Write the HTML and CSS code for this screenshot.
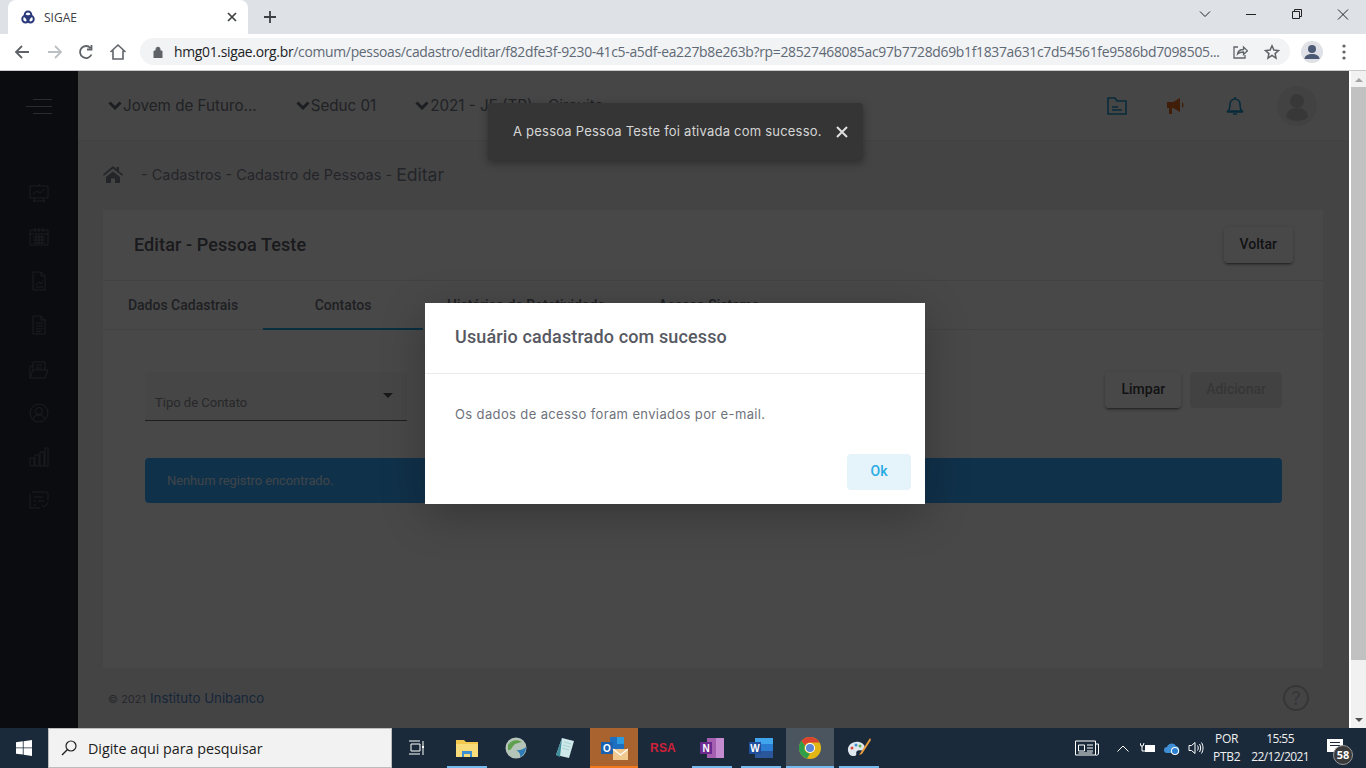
FILE: index.html
```html
<!DOCTYPE html>
<html lang="pt-BR">
<head>
<meta charset="utf-8">
<title>SIGAE</title>
<link rel="stylesheet" href="styles.css">
</head>
<body>
<header class="tabbar">
  <div class="tab">
    <svg class="favicon" viewBox="0 0 16 16" width="14" height="14"><g fill="none" stroke="#2b3a7a" stroke-width="2.200"><circle cx="8" cy="5.600" r="3.800"/><circle cx="5.200" cy="10.400" r="3.800"/><circle cx="10.800" cy="10.400" r="3.800"/></g></svg>
    <span class="tab-title">SIGAE</span>
    <svg class="tab-close" viewBox="0 0 10 10" width="10" height="10"><path d="M1 1l8 8M9 1l-8 8" stroke="#3c4043" stroke-width="1.700"/></svg>
  </div>
  <svg class="newtab" viewBox="0 0 12 12" width="12" height="12"><path d="M6 0v12M0 6h12" stroke="#3c4043" stroke-width="1.800"/></svg>
  <div class="winctrls">
    <svg class="winbtn" viewBox="0 0 46 16" width="46" height="16"><path d="M18 5.500l5 5 5-5" fill="none" stroke="#222" stroke-width="1"/></svg>
    <svg class="winbtn" viewBox="0 0 46 16" width="46" height="16"><path d="M18 8.500h10" stroke="#222"/></svg>
    <svg class="winbtn" viewBox="0 0 46 16" width="46" height="16"><path d="M18.500 5.500h7v7h-7zM20.500 5.500v-2h7v7h-2" fill="none" stroke="#222"/></svg>
    <svg class="winbtn" viewBox="0 0 46 16" width="46" height="16"><path d="M18 3.500l10 10M28 3.500l-10 10" stroke="#222"/></svg>
  </div>
</header>
<nav class="toolbar">
  <svg class="navicon" viewBox="0 0 16 16" width="16" height="16"><path d="M15 8H2M8 2L2 8l6 6" fill="none" stroke="#5f6368" stroke-width="1.800"/></svg>
  <svg class="navicon" viewBox="0 0 16 16" width="16" height="16"><path d="M1 8h13M8 2l6 6-6 6" fill="none" stroke="#bcc0c4" stroke-width="1.800"/></svg>
  <svg class="navicon nav-tight" viewBox="0 0 16 16" width="16" height="16"><path d="M13.500 10.500A6 6 0 1 1 12.500 4M13.500 1v4.500H9" fill="none" stroke="#5f6368" stroke-width="1.800"/></svg>
  <svg class="navicon nav-tight" viewBox="0 0 18 18" width="18" height="18"><path d="M1.500 9L9 2l7.500 7M4 7.500V16h10V7.500" fill="none" stroke="#5f6368" stroke-width="1.600"/></svg>
  <div class="omnibox">
    <svg class="lock" viewBox="0 0 10 12" width="10" height="12"><path d="M1 5h8v7H1zM3 5V3.200a2 2 0 0 1 4 0V5" fill="#5f6368" stroke="#5f6368"/></svg>
    <div class="url"><span class="url-host">hmg01.sigae.org.br</span>/comum/pessoas/cadastro/editar/f82dfe3f-9230-41c5-a5df-ea227b8e263b?rp=28527468085ac97b7728d69b1f1837a631c7d54561fe9586bd7098505...</div>
    <svg class="share" viewBox="0 0 16 16" width="16" height="16"><path d="M6 3H2v11h11v-3M5.500 10c.5-3 3-4.500 6-4.500V3l4 3.800-4 3.700V8c-2.500 0-4.500.5-6 2z" fill="none" stroke="#5f6368" stroke-width="1.300"/></svg>
    <svg class="star" viewBox="0 0 16 16" width="16" height="16"><path d="M8 1.800l1.900 4.200 4.600.5-3.400 3.100.9 4.500L8 11.400l-4 2.700.9-4.500-3.400-3.100 4.600-.5z" fill="none" stroke="#5f6368" stroke-width="1.500"/></svg>
  </div>
  <div class="profile"><svg viewBox="0 0 22 22" width="22" height="22"><circle cx="11" cy="8" r="4" fill="#4d5a75"/><path d="M3.500 18c0-3.500 3.500-5 7.500-5s7.500 1.500 7.500 5z" fill="#4d5a75"/></svg></div>
  <svg class="kebab" viewBox="0 0 4 16" width="4" height="16"><circle cx="2" cy="2" r="1.600" fill="#5f6368"/><circle cx="2" cy="8" r="1.600" fill="#5f6368"/><circle cx="2" cy="14" r="1.600" fill="#5f6368"/></svg>
</nav>

<div class="window">
  <div class="viewport">
    <aside class="sidebar">
      <div class="burger"><i class="b-short"></i><i class="b-long"></i><i class="b-short"></i></div>
      <ul class="sidenav">
        <li><svg viewBox="0 0 20 20" width="20" height="20"><path d="M1 3h18v12H1zM10 1v2M4 11l4-3 3 2 5-4M6 15l-1.500 4M14 15l1.500 4M4 18h12"/></svg></li>
        <li><svg viewBox="0 0 20 20" width="20" height="20"><path d="M1 3h18v15H1zM1 7h18M6 1v4M10 1v4M14 1v4M4 10h12M4 13h12M4 16h12M7 8v9M10 8v9M13 8v9"/></svg></li>
        <li><svg viewBox="0 0 20 20" width="20" height="20"><path d="M4 1h8l4 4v14H4zM12 1v4h4M7 14l3-3 2 2 2-3M7 16h7"/></svg></li>
        <li><svg viewBox="0 0 20 20" width="20" height="20"><path d="M4 1h8l4 4v14H4zM12 1v4h4M7 8h7M7 11h7M7 14h7M7 16.500h5"/></svg></li>
        <li><svg viewBox="0 0 20 20" width="20" height="20"><path d="M1 19V7h3M4 3h12v8M4 3v8M7 6h6M7 9h6M1 19h15l3-8H4z"/></svg></li>
        <li><svg viewBox="0 0 20 20" width="20" height="20"><circle cx="10" cy="10" r="9"/><circle cx="10" cy="8" r="3.500"/><path d="M4 16c1-3 3-4 6-4s5 1 6 4"/></svg></li>
        <li><svg viewBox="0 0 20 20" width="20" height="20"><path d="M1 11h4v8H1zM6 8h4v11H6zM11 5h4v14h-4zM16 1h3v18h-3z"/></svg></li>
        <li><svg viewBox="0 0 20 20" width="20" height="20"><path d="M3 1h14a2 2 0 0 1 2 2v6M1 3v14h10M5 6h9M5 10h2M9 10h6M5 14h2M13 14l2 2 4-4"/></svg></li>
      </ul>
    </aside>
    <main class="main">
      <div class="topbar">
        <div class="crumb-select"><svg class="chev" viewBox="0 0 14 9" width="14" height="9"><path d="M1.500 1.500L7 7l5.500-5.500"/></svg><span>Jovem de Futuro...</span></div>
        <div class="crumb-select"><svg class="chev" viewBox="0 0 14 9" width="14" height="9"><path d="M1.500 1.500L7 7l5.500-5.500"/></svg><span>Seduc 01</span></div>
        <div class="crumb-select"><svg class="chev" viewBox="0 0 14 9" width="14" height="9"><path d="M1.500 1.500L7 7l5.500-5.500"/></svg><span>2021 - JF (TP) - Circuito</span></div>
        <div class="top-icons">
          <svg class="ti-blue ti-folder" viewBox="0 0 20 18" width="20" height="18"><path d="M1 1h7l2 3h9v13H1zM5 10h6M5 13h10"/></svg>
          <svg class="ti-orange" viewBox="0 0 22 18" width="22" height="18"><path d="M1 5h6l7-4v14l-7-4H6v6H3v-6H1z" fill="#d9651f"/><path d="M16 5c2 1 2 5 0 6z" fill="#d9651f"/></svg>
          <svg class="ti-blue ti-bell" viewBox="0 0 18 20" width="18" height="20"><path d="M2 15c2-2 2-4 2-7a5 5 0 0 1 10 0c0 3 0 5 2 7zM1 16h16M7 18h4M9 1v2"/></svg>
          <div class="avatar"><svg viewBox="0 0 40 40" width="40" height="40"><circle cx="20" cy="15" r="7" fill="#bdbdbd"/><path d="M9 31c0-6 5-9 11-9s11 3 11 9c-3 3-7 4-11 4s-8-1-11-4z" fill="#bdbdbd"/></svg></div>
        </div>
      </div>
      <div class="breadcrumb">
        <svg class="home" viewBox="0 0 20 17" width="20" height="17"><path d="M10 0L0 8.500l1 1.200L10 2.500l9 7.200 1-1.200-4-3.300V1h-2.500v2.300zM3 11v6h5v-4.500h4V17h5v-6l-7-5.500z" fill="#7b7e8a"/></svg>
        <span class="crumb-path">- Cadastros - Cadastro de Pessoas -</span>
        <span class="crumb-current">Editar</span>
      </div>
      <section class="card">
        <div class="card-head">
          <h1 class="card-title">Editar - Pessoa Teste</h1>
          <button class="btn">Voltar</button>
        </div>
        <div class="tabs">
          <div class="tabitem">Dados Cadastrais</div>
          <div class="tabitem active">Contatos</div>
          <div class="tabitem">Histórico de Rotatividade</div>
          <div class="tabitem">Acesso Sistema</div>
        </div>
        <div class="card-body">
          <div class="form-row">
            <div class="select"><span>Tipo de Contato</span><i class="caret"></i></div>
            <div class="form-actions">
              <button class="btn">Limpar</button>
              <button class="btn btn-disabled">Adicionar</button>
            </div>
          </div>
          <div class="alert">Nenhum registro encontrado.</div>
        </div>
      </section>
      <footer class="footer">
        <span class="foot-text"><span class="foot-copy">© 2021</span><span class="foot-link">Instituto Unibanco</span></span>
        <div class="help">?</div>
      </footer>
    </main>
    <div class="backdrop"></div>
    <div class="toast">
      <span class="toast-text">A pessoa Pessoa Teste foi ativada com sucesso.</span>
      <svg viewBox="0 0 12 12" width="12" height="12"><path d="M1 1l10 10M11 1L1 11" stroke="#e0e0e0" stroke-width="2"/></svg>
    </div>
    <div class="modal">
      <div class="modal-head">Usuário cadastrado com sucesso</div>
      <div class="modal-body">Os dados de acesso foram enviados por e-mail.</div>
      <div class="modal-foot"><button class="btn-ok">Ok</button></div>
    </div>
  </div>
  <div class="scrollbar">
    <i class="sb-up"></i>
    <div class="sb-thumb"></div>
    <i class="sb-down"></i>
  </div>
</div>

<footer class="taskbar">
  <div class="start"><svg viewBox="0 0 16 16" width="16" height="16"><path d="M0 2.300L6.800 1.300v6.200H0zM7.600 1.200L16 0v7.500H7.600zM0 8.300h6.800v6.300L0 13.700zM7.600 8.300H16V16l-8.400-1.200z" fill="#fff"/></svg></div>
  <div class="search">
    <svg viewBox="0 0 16 16" width="16" height="16"><circle cx="10" cy="6" r="5" fill="none" stroke="#222" stroke-width="1.200"/><path d="M6.500 9.500L1 15" stroke="#222" stroke-width="1.400"/></svg>
    <span>Digite aqui para pesquisar</span>
  </div>
  <div class="apps">
    <div class="app"><svg class="taskview" viewBox="0 0 16 16" width="16" height="16"><path d="M1 1h11M3 4h9v7H3zM1 14h11M15 1v14" fill="none" stroke="#fff" stroke-width="1"/><path d="M14 6h2v2h-2z" fill="#fff"/></svg></div>
    <div class="app running"><svg viewBox="0 0 22 18" width="22" height="18"><path d="M0 1h8l2 2h12v15H0z" fill="#f2c94c"/><path d="M0 5h22v13H0z" fill="#f8dc7a"/><path d="M6 12h10v6h-2v-3H8v3H6z" fill="#3d8fd1"/></svg></div>
    <div class="app"><svg viewBox="0 0 22 22" width="22" height="22"><circle cx="11" cy="11" r="10.500" fill="#b5c4b8"/><path d="M3 8c3-5 9-6 14-3-3 1-6 1-8 3s-3 6-6 5z" fill="#5fa04e"/><path d="M11 13c3 1 8-1 10-3 0 5-3 9-6 10 1-3-1-5-4-7z" fill="#2e7bb5"/></svg></div>
    <div class="app"><svg viewBox="0 0 22 22" width="22" height="22"><path d="M8 1l12 3-5 17L2 18z" fill="#cfe8ea"/><path d="M8 1L2 18l4 2z" fill="#3f8d9a"/><path d="M10 5l7 2M9 8l7 2M8 11l7 2" stroke="#9cc" stroke-width=".8"/></svg></div>
    <div class="app outlook"><svg viewBox="0 0 27 24" width="27" height="24"><path d="M9 1h14v14H9z" fill="#1f6fc0"/><path d="M16 1h7v7h-7z" fill="#2b9be0"/><path d="M0 6h12v12H0z" fill="#1a62b0"/><text x="6" y="15.500" class="app-letter" text-anchor="middle">O</text><path d="M12 13h15v11H12z" fill="#f1c98f"/><path d="M12 13l7.500 6 7.500-6" fill="none" stroke="#fff" stroke-width="1.200"/></svg></div>
    <div class="app"><span class="rsa">RSA</span></div>
    <div class="app running"><svg viewBox="0 0 24 22" width="24" height="22"><path d="M7 1h17v20H7z" fill="#a45fb0"/><path d="M16 1h8v20h-8z" fill="#c58bd0"/><path d="M0 5h12v12H0z" fill="#6c2a90"/><text x="6" y="14.500" class="app-letter" text-anchor="middle">N</text></svg></div>
    <div class="app running"><svg viewBox="0 0 24 22" width="24" height="22"><path d="M6 1h18v20H6z" fill="#2b579a"/><path d="M6 1h18v6H6z" fill="#41a5ee"/><path d="M6 7h18v7H6z" fill="#2b7cd3"/><path d="M0 5h12v12H0z" fill="#1e4e9c"/><text x="6" y="14.500" class="app-letter" text-anchor="middle">W</text></svg></div>
    <div class="app running active"><svg viewBox="0 0 22 22" width="22" height="22"><circle cx="11" cy="11" r="11" fill="#e2b715"/><path d="M11 0a11 11 0 0 1 9.500 5.500H11a5.500 5.500 0 0 0-5 3L2.300 4A11 11 0 0 1 11 0z" fill="#d9432f"/><path d="M2.300 4L6 8.500A5.500 5.500 0 0 0 11 16.500L8 21.500A11 11 0 0 1 2.300 4z" fill="#2f9e4a"/><circle cx="11" cy="11" r="5" fill="#fff"/><circle cx="11" cy="11" r="4" fill="#5b86d6"/></svg></div>
    <div class="app running"><svg viewBox="0 0 24 22" width="24" height="22"><path d="M1 14C0 8 6 4 12 5c5 1 7 5 5 7-2 3-5 0-7 2s1 5-3 5-5-2-6-5z" fill="#dfe8ee"/><circle cx="5" cy="11" r="1.500" fill="#d94a3d"/><circle cx="9" cy="8" r="1.500" fill="#3f8fd1"/><circle cx="13" cy="9" r="1.500" fill="#5fb04e"/><path d="M23 1l-9 14-2 3 3-1L24 3z" fill="#e89b3a"/></svg></div>
  </div>
  <div class="tray">
    <svg class="tray-news" viewBox="0 0 24 16" width="24" height="16"><path d="M.5 1h20v14H.5zM20.500 4h3v9a2 2 0 0 1-3 2M3.500 5h6v6h-6zM12 5h6M12 8h6M12 11h6M3.500 13h14" fill="none" stroke="#fff"/></svg>
    <svg class="tray-caret" viewBox="0 0 12 7" width="12" height="7"><path d="M.5 6.500L6 1l5.500 5.500" fill="none" stroke="#fff"/></svg>
    <svg class="tray-ico" viewBox="0 0 16 12" width="16" height="12"><path d="M5 3h10v7H5z" fill="#fff"/><path d="M0 1l1 3h2l1-3M2 4v5h3" fill="none" stroke="#fff"/></svg>
    <svg class="tray-ico" viewBox="0 0 16 14" width="16" height="14"><path d="M3 12a3 3 0 0 1 0-6c1-4 7-5 9-1 3 0 4 4 3 7z" fill="#3f8fd6"/><circle cx="11" cy="10" r="4" fill="#fff"/><circle cx="11" cy="10" r="3" fill="#2a7fd0"/></svg>
    <svg class="tray-ico" viewBox="0 0 16 14" width="16" height="14"><path d="M1 4.500h2.500L7 1.500v11l-3.500-3H1zM9.500 4.500c1 1.500 1 3.500 0 5M11.500 3c1.500 2.500 1.500 5.500 0 8M13.500 1.500c2 3.500 2 7.500 0 11" fill="none" stroke="#fff"/></svg>
    <div class="lang"><span>POR</span><span>PTB2</span></div>
    <div class="clock"><span>15:55</span><span>22/12/2021</span></div>
    <div class="notif">
      <svg viewBox="0 0 16 13" width="16" height="13"><path d="M0 0h16v13H0z" fill="#fff"/><path d="M3 3.500h10M3 6.500h10" stroke="#1a2a3b"/></svg>
      <span class="notif-badge">58</span>
    </div>
  </div>
</footer>
</body>
</html>
```

FILE: styles.css
```css
* { box-sizing: border-box; }
html, body { height: 100%; }
body {
  margin: 0;
  height: 768px;
  overflow: hidden;
  display: flex;
  flex-direction: column;
  font-family: "Roboto", "Liberation Sans", sans-serif;
  background: #fff;
}
button { font-family: inherit; }

/* Browser tab strip */
.tabbar {
  height: 34px;
  flex: none;
  display: flex;
  align-items: center;
  background: #dee1e6;
  padding-left: 8px;
}
.tab {
  width: 240px;
  height: 34px;
  background: #fff;
  border-radius: 8px 8px 0 0;
  display: flex;
  align-items: center;
  padding: 0 11px 0 13px;
}
.favicon { flex: none; }
.tab-title {
  flex: 1;
  margin-left: 9px;
  font: 12px "Open Sans", "Liberation Sans", sans-serif;
  color: #3c4043;
}
.newtab { margin-left: 16px; }
.winctrls { margin-left: auto; align-self: flex-start; margin-top: 6px; display: flex; }
.winbtn { display: block; }

/* Browser toolbar */
.toolbar {
  height: 37px;
  flex: none;
  display: flex;
  align-items: center;
  background: #fff;
  border-bottom: 1px solid #c8c9cb;
  padding-left: 14px;
  padding-bottom: 1px;
}
.navicon { flex: none; margin-right: 17px; }
.nav-tight { margin-left: -2px; }
.omnibox {
  width: 1150px;
  height: 27px;
  margin-left: -4px;
  border-radius: 14px;
  background: #f1f3f4;
  display: flex;
  align-items: center;
  padding: 0 10px 0 13px;
  flex: none;
}
.lock { flex: none; }
.url {
  margin-left: 11px;
  flex: none;
  white-space: nowrap;
  font: 13.900px "Open Sans", "Liberation Sans", sans-serif;
  letter-spacing: -.3px;
  color: #5f6875;
}
.url-host { color: #202124; }
.share { margin-left: auto; flex: none; }
.star { margin-left: 16px; flex: none; }
.profile {
  width: 22px;
  height: 22px;
  margin-left: 11px;
  border-radius: 50%;
  background: #dfe1e6;
  flex: none;
}
.profile svg { display: block; }
.kebab { margin-left: 19px; flex: none; }

/* Page area */
.window { flex: 1; display: flex; min-height: 0; }
.viewport { flex: 1; display: flex; position: relative; min-width: 0; }

.sidebar {
  width: 78px;
  flex: none;
  background: #222a36;
  display: flex;
  flex-direction: column;
  align-items: center;
}
.burger {
  width: 26px;
  margin-top: 28px;
  display: flex;
  flex-direction: column;
  align-items: flex-end;
  gap: 6px;
}
.burger i { display: block; height: 1px; background: #8a8f98; }
.b-short { width: 19px; }
.b-long { width: 26px; }
.sidenav {
  list-style: none;
  margin: 69px 0 0;
  padding: 0;
  display: flex;
  flex-direction: column;
  gap: 24px;
}
.sidenav li { height: 20px; }
.sidenav svg { display: block; fill: none; stroke: #74777e; stroke-width: .7; }

.main {
  flex: 1;
  min-width: 0;
  display: flex;
  flex-direction: column;
  background: #e3e4e6;
}
.topbar {
  height: 70px;
  flex: none;
  display: flex;
  align-items: center;
  gap: 39px;
  padding: 0 32px 0 30px;
  border-bottom: 1px solid #dcdcde;
  background: #e9eaeb;
  font: 15.200px "Inter", "Open Sans", sans-serif;
  color: #6f727d;
}
.crumb-select { display: flex; align-items: center; gap: 1px; white-space: nowrap; }
.chev { fill: none; stroke: #62666f; stroke-width: 3; }
.top-icons { margin-left: auto; display: flex; align-items: center; }
.ti-blue { fill: none; stroke: #1c8fc4; stroke-width: 1.600; }
.ti-folder { margin-right: 39px; }
.ti-orange { margin-right: 38px; }
.ti-bell { margin-right: 33px; }
.avatar {
  width: 40px;
  height: 40px;
  border-radius: 50%;
  background: #dcdcdc;
}
.avatar svg { display: block; }

.breadcrumb {
  height: 69px;
  flex: none;
  display: flex;
  align-items: center;
  padding: 0 0 2px 25px;
  color: #7b7e8a;
  font: 14.500px "Inter", "Open Sans", sans-serif;
}
.home { flex: none; margin-right: 18px; }
.crumb-current { margin-left: 4px; font-size: 17.600px; }

.card {
  flex: 1;
  min-height: 0;
  margin: 0 26px 0 25px;
  background: #f2f2f3;
  display: flex;
  flex-direction: column;
}
.card-head {
  height: 71px;
  flex: none;
  display: flex;
  align-items: center;
  justify-content: space-between;
  padding: 0 30px 1px 31px;
  border-bottom: 1px solid #dcdcdf;
}
.card-title { margin: 0; font: 500 18px "Roboto", sans-serif; letter-spacing: .1px; color: #575962; }
.btn {
  height: 36px;
  padding: 0 16px 2px;
  border: 0;
  border-radius: 4px;
  background: #f2f2f3;
  color: #3e3f45;
  font: 500 14px "Roboto", sans-serif;
  box-shadow: 0 3px 1px -2px rgba(0,0,0,.25), 0 2px 2px rgba(0,0,0,.2), 0 1px 5px rgba(0,0,0,.16);
}
.btn-disabled { background: #dedede; color: #b5b5b5; box-shadow: none; }
.tabs {
  height: 49px;
  flex: none;
  display: flex;
  border-bottom: 1px solid #dcdcdf;
}
.tabitem {
  min-width: 160px;
  padding: 0 24px;
  display: flex;
  align-items: center;
  justify-content: center;
  color: #6a6c75;
  font: 500 14px "Roboto", sans-serif;
  white-space: nowrap;
}
.tabitem.active { border-bottom: 2px solid #1f9ad3; margin-bottom: -1px; }
.card-body { padding: 42px 41px 0 42px; }
.form-row { display: flex; justify-content: space-between; height: 49px; }
.select {
  width: 262px;
  height: 49px;
  position: relative;
  background: #e9e9ea;
  border-bottom: 1px solid #5f6167;
  border-radius: 4px 4px 0 0;
  padding: 23px 10px 0;
  color: #85878f;
  font: 13px "Roboto", sans-serif;
}
.caret {
  position: absolute;
  right: 14px;
  top: 21px;
  border-style: solid;
  border-width: 5px 5px 0;
  border-color: #555 transparent transparent;
}
.form-actions { display: flex; align-items: flex-start; gap: 9px; }
.alert {
  height: 45px;
  margin-top: 37px;
  border-radius: 4px;
  background: #36a3f7;
  color: #cfe5f6;
  padding: 0 22px;
  display: flex;
  align-items: center;
  font: 13px "Roboto", sans-serif;
  letter-spacing: -.1px;
}

.footer {
  height: 60px;
  flex: none;
  display: flex;
  align-items: center;
  justify-content: space-between;
  padding: 0 40px 0 30px;
  color: #85878f;
  font: 13.300px "Inter", "Open Sans", sans-serif;
}
.foot-text { display: flex; align-items: baseline; gap: 4px; }
.foot-copy { font-size: 11px; }
.foot-link { color: #4f7fc0; }
.help {
  width: 26px;
  height: 26px;
  border-radius: 50%;
  border: 2px solid #b4b5b8;
  color: #b4b5b8;
  display: flex;
  align-items: center;
  justify-content: center;
  font-size: 18px;
}

/* Overlays */
.backdrop {
  position: absolute;
  inset: 0;
  background: rgba(0,0,0,.7);
}
.toast {
  position: absolute;
  left: 488px;
  top: 32px;
  width: 375px;
  height: 57px;
  padding: 0 15px 0 25px;
  display: flex;
  align-items: center;
  justify-content: space-between;
  background: #353535;
  border-radius: 4px;
  color: #d6d6d6;
  font: 13px "Inter", "Open Sans", sans-serif;
  letter-spacing: .22px;
  white-space: nowrap;
  box-shadow: 0 3px 8px rgba(0,0,0,.35);
}
.toast-text { margin-bottom: 2px; }
.modal {
  position: absolute;
  left: 425px;
  top: 232px;
  width: 500px;
  height: 201px;
  background: #fff;
  box-shadow: 0 11px 40px rgba(0,0,0,.25);
}
.modal-head {
  height: 71px;
  padding: 0 30px 3px;
  display: flex;
  align-items: center;
  border-bottom: 1px solid #e9ecef;
  color: #575962;
  font: 500 18px "Roboto", sans-serif;
  letter-spacing: .13px;
}
.modal-body {
  height: 80px;
  padding: 32px 30px 0;
  color: #6f727d;
  font: 13px "Inter", "Open Sans", sans-serif;
  letter-spacing: .37px;
}
.modal-foot { display: flex; justify-content: flex-end; padding-right: 14px; }
.btn-ok {
  width: 64px;
  height: 36px;
  border: 0;
  padding-bottom: 3px;
  border-radius: 4px;
  background: #e5f4fb;
  color: #29abe2;
  font: 500 14px "Roboto", sans-serif;
}

/* Scrollbar */
.scrollbar {
  width: 17px;
  flex: none;
  background: #f1f1f1;
  border-left: 2px solid #fff;
  display: flex;
  flex-direction: column;
  align-items: center;
}
.sb-up, .sb-down { display: block; border-style: solid; border-color: transparent; margin: 7px 0 6px; }
.sb-up { border-width: 0 4px 4px; border-bottom-color: #a3a3a3; }
.sb-down { border-width: 4px 4px 0; border-top-color: #505050; margin-top: auto; }
.sb-thumb { width: 15px; height: 573px; margin-top: -1px; background: #c1c1c1; }

/* Taskbar */
.taskbar {
  height: 40px;
  flex: none;
  display: flex;
  align-items: stretch;
  background: #1a2a3b;
  color: #fff;
}
.start { width: 48px; flex: none; display: flex; align-items: center; justify-content: center; }
.search {
  width: 344px;
  flex: none;
  background: #f2f2f2;
  border: 1px solid #bcbcbc;
  display: flex;
  align-items: center;
  padding-left: 12px;
  color: #202020;
  font: 14.300px "Open Sans", "Liberation Sans", sans-serif;
}
.search span { margin-left: 11px; }
.apps { display: flex; flex: none; gap: 1px; padding-left: 2px; }
.app {
  width: 48px;
  flex: none;
  display: flex;
  align-items: center;
  justify-content: center;
  position: relative;
}
.taskview { margin-right: 4px; }
.app.running::after {
  content: "";
  position: absolute;
  left: 4px;
  right: 4px;
  bottom: 0;
  height: 2px;
  background: #76b9ed;
}
.app.active { background: #4a5560; }
.app.active::after { left: 0; right: 0; }
.app.outlook { background: #a8632f; }
.app.outlook::after {
  content: "";
  position: absolute;
  left: 0;
  right: 0;
  bottom: 0;
  height: 2px;
  background: #f0781e;
}
.app-letter { font: 700 10px "Liberation Sans", sans-serif; fill: #fff; }
.rsa { color: #d0213a; font: 700 12px "Liberation Sans", sans-serif; letter-spacing: .2px; }
.tray {
  flex: 1;
  min-width: 0;
  display: flex;
  align-items: center;
  padding-left: 192px;
  color: #f0f0f0;
}
.tray-news { margin-right: 18px; flex: none; }
.tray-caret { margin-right: 11px; flex: none; }
.tray-ico { margin-right: 8px; flex: none; }
.lang, .clock {
  display: flex;
  flex-direction: column;
  align-items: center;
  flex: none;
  gap: 2px;
  font: 12px/16px "Open Sans", "Liberation Sans", sans-serif;
}
.lang { margin-left: 1px; letter-spacing: -.3px; }
.clock { margin-left: 11px; letter-spacing: -.6px; }
.notif { margin-left: 18px; flex: none; position: relative; height: 40px; display: flex; align-items: center; }
.notif svg { display: block; margin-top: -6px; }
.notif-badge {
  position: absolute;
  left: 6px;
  top: 17px;
  width: 20px;
  height: 20px;
  border-radius: 50%;
  background: #3a3a3a;
  border: 1px solid #999;
  color: #fff;
  font: 700 11px/18px "Open Sans", sans-serif;
  text-align: center;
}
```
